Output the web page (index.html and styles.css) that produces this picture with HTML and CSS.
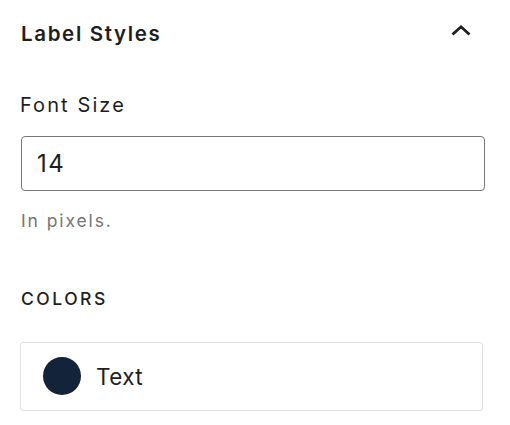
FILE: index.html
```html
<!DOCTYPE html>
<html lang="en">
<head>
<meta charset="utf-8">
<title>Label Styles</title>
<link rel="stylesheet" href="styles.css">
</head>
<body>
<div class="panel">
  <div class="panel-header">
    <h2 class="panel-title">Label Styles</h2>
    <svg class="chevron" width="24" height="14" viewBox="0 0 24 14" aria-hidden="true">
      <polyline points="3.5,10.5 12,2.8 20.5,10.5" fill="none" stroke="#1e1e1e" stroke-width="2.8"/>
    </svg>
  </div>
  <div class="field">
    <label class="field-label" for="fs">Font Size</label>
    <input id="fs" class="text-input" type="text" value="14">
    <p class="help">In pixels.</p>
  </div>
  <div class="colors">
    <h3 class="section-heading">COLORS</h3>
    <div class="color-item">
      <span class="swatch"></span>
      <span class="color-name">Text</span>
    </div>
  </div>
</div>
</body>
</html>
```

FILE: styles.css
```css
html, body {
  margin: 0;
  padding: 0;
  background: #ffffff;
}

body {
  font-family: Inter, "Noto Sans", "Liberation Sans", sans-serif;
  color: #1e1e1e;
}

.panel {
  padding: 22px 25px 0 21px;
}

.panel-header {
  display: flex;
  justify-content: space-between;
  align-items: flex-start;
}

.panel-title {
  margin: 0;
  font-size: 20.5px;
  line-height: 24px;
  font-weight: 600;
  letter-spacing: 1.65px;
}

.chevron {
  display: block;
  margin-top: 2px;
  margin-right: 12px;
}

.field {
  margin-top: 46.5px;
}

.field-label {
  display: block;
  margin-left: -1px;
  font-size: 20px;
  line-height: 24px;
  letter-spacing: 2.1px;
  margin-bottom: 19.5px;
}

.text-input {
  display: block;
  box-sizing: border-box;
  width: 100%;
  margin: 0;
  height: 55px;
  padding: 0 15px;
  border: 1.5px solid #777777;
  border-radius: 4px;
  font-family: inherit;
  font-size: 24px;
  letter-spacing: 1.5px;
  color: #1e1e1e;
  background: #fff;
  outline: none;
}

.help {
  margin: 19.3px 0 0;
  font-size: 17.5px;
  line-height: 22px;
  letter-spacing: 1.9px;
  color: #757575;
}

.colors {
  margin-top: 55.3px;
}

.section-heading {
  margin: 0;
  font-size: 17.5px;
  line-height: 22px;
  font-weight: 500;
  letter-spacing: 2.5px;
}

.color-item {
  margin-top: 32.4px;
  margin-left: -1px;
  box-sizing: border-box;
  width: calc(100% - 1px);
  height: 69px;
  display: flex;
  align-items: center;
  gap: 15px;
  padding-left: 22px;
  border: 1.5px solid #e0e0e0;
  border-radius: 3px;
}

.swatch {
  width: 38px;
  height: 38px;
  border-radius: 50%;
  background: #13233a;
  flex: none;
}

.color-name {
  font-size: 22.5px;
  letter-spacing: 0.4px;
}
```
